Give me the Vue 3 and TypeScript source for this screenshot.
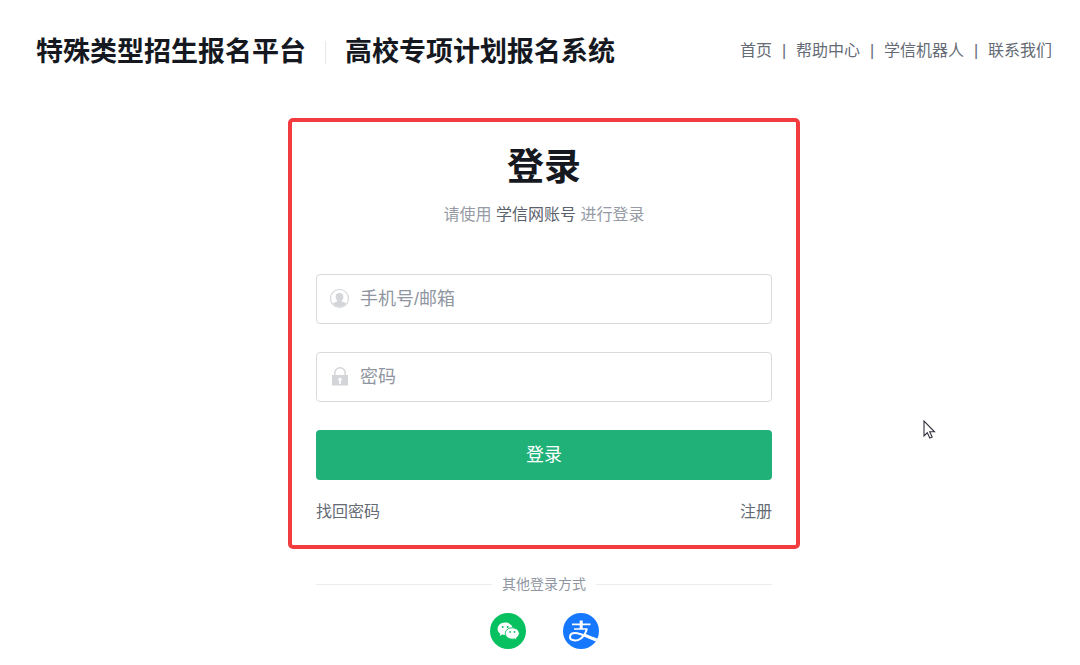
<script setup lang="ts">
import { ref } from 'vue'

interface NavLink {
  label: string
  href: string
}

const links: NavLink[] = [
  { label: '首页', href: '#home' },
  { label: '帮助中心', href: '#help' },
  { label: '学信机器人', href: '#robot' },
  { label: '联系我们', href: '#contact' },
]

const account = ref('')
const password = ref('')
</script>

<template>
  <div class="page">
    <header class="header">
      <div class="brand">
        <span>特殊类型招生报名平台</span>
        <i class="brand-line"></i>
        <span>高校专项计划报名系统</span>
      </div>
      <nav class="nav">
        <template v-for="(link, index) in links" :key="link.href">
          <span v-if="index > 0" class="nav-line">|</span>
          <a :href="link.href">{{ link.label }}</a>
        </template>
      </nav>
    </header>

    <main class="main">
      <form class="card" @submit.prevent>
        <h1>登录</h1>
        <p class="hint">请使用 <b>学信网账号</b> 进行登录</p>

        <label class="field">
          <svg width="20" height="20" viewBox="0 0 20 20" aria-hidden="true">
            <circle cx="9.5" cy="9.5" r="9" fill="none" stroke="#d6d8dc" stroke-width="1.2" />
            <path
              fill="#d3d5d9"
              d="M9.5 3.900c2.300 0 3.900 1.600 3.900 3.900 0 1.600-.7 2.900-1.600 3.600v1c1.900.7 3.700 1 4.400 2.100a8.500 8.500 0 0 1-13.400 0c.7-1.100 2.500-1.400 4.400-2.100v-1C6.300 10.700 5.600 9.400 5.600 7.800c0-2.300 1.600-3.900 3.900-3.900z"
            />
          </svg>
          <input v-model="account" type="text" placeholder="手机号/邮箱" aria-label="手机号/邮箱" />
        </label>

        <label class="field">
          <svg width="20" height="20" viewBox="0 0 20 20" aria-hidden="true">
            <path d="M4.800 9V6a5.200 5.200 0 0 1 10.400 0V9" fill="none" stroke="#d3d5d9" stroke-width="1.5" />
            <path
              fill="#d3d5d9"
              fill-rule="evenodd"
              d="M2 8h16v10.500H2zM10 10.700a1.800 1.800 0 0 0-.8 3.400V17h1.600v-2.900a1.800 1.800 0 0 0-.8-3.400z"
            />
          </svg>
          <input v-model="password" type="password" placeholder="密码" aria-label="密码" />
        </label>

        <button class="submit" type="submit">登录</button>

        <div class="below">
          <a href="#recover">找回密码</a>
          <a href="#register">注册</a>
        </div>
      </form>

      <section class="others">
        <div class="others-title">其他登录方式</div>
        <div class="providers">
          <a href="#wechat" aria-label="微信">
            <svg width="36" height="36" viewBox="0 0 36 36">
              <circle cx="18" cy="18" r="18" fill="#07c160" />
              <path
                fill="#fff"
                d="M15.200 9.500C11 9.500 7.600 12.300 7.600 15.900c0 2 1 3.700 2.700 4.800l-.7 2.300 2.700-1.400c.9.3 1.900.4 2.900.4 4.200 0 7.600-2.700 7.600-6.100 0-3.600-3.400-6.400-7.600-6.400z"
              />
              <path
                fill="#fff"
                stroke="#07c160"
                stroke-width="1"
                d="M22.300 14.800c-3.900 0-7 2.500-7 5.700s3.100 5.700 7 5.700c.8 0 1.500-.1 2.200-.3l2.600 1.300-.7-2.300c1.800-1 2.900-2.600 2.900-4.400 0-3.200-3.100-5.700-7-5.700z"
              />
              <g fill="#07c160">
                <circle cx="12.7" cy="13.9" r="1" />
                <circle cx="17.7" cy="13.9" r="1" />
                <circle cx="20.1" cy="18.9" r=".9" />
                <circle cx="24.5" cy="18.9" r=".9" />
              </g>
            </svg>
          </a>
          <a href="#alipay" aria-label="支付宝">
            <svg width="36" height="36" viewBox="0 0 36 36">
              <circle cx="18" cy="18" r="18" fill="#1677ff" />
              <g fill="none" stroke="#fff">
                <path d="M18.200 7.500v8.500" stroke-width="3" />
                <path d="M9 11.400h18.500M11 16h13.500" stroke-width="1.7" />
                <path
                  d="M23.800 16c-1.100 4-3.200 7.400-6.300 9.700-3.800 2.700-10.500 2.300-10.500-1.700 0-2.400 2.200-3.900 5-3.900 4.400 0 10.500 2.900 21 7.200"
                  stroke-width="2"
                />
                <path d="M21 21.800c4 1.700 8 3.400 12.800 5.100" stroke-width="3" />
              </g>
            </svg>
          </a>
        </div>
      </section>
    </main>

    <svg class="pointer" width="13" height="20" viewBox="0 0 13 20" aria-hidden="true">
      <path
        d="M1 1v15l3.300-3.200 2.500 5.200 2.400-1.100-2.500-5.100h4.800z"
        fill="#fff"
        stroke="#33333f"
        stroke-width="1.1"
      />
    </svg>
  </div>
</template>

<style>
body {
  background: #fff;
}
</style>

<style scoped>
.page {
  position: relative;
  font-family: 'Liberation Sans', 'Noto Sans CJK SC', sans-serif;
  font-size: 16px;
  line-height: 24px;
  color: #656b75;
}

a {
  color: inherit;
  text-decoration: none;
}

.header {
  display: flex;
  align-items: center;
  justify-content: space-between;
  height: 102px;
  padding: 0 28px 0 36px;
}

.brand {
  display: flex;
  align-items: center;
  gap: 19px;
  padding-top: 2px;
  font-size: 27px;
  line-height: 40px;
  font-weight: 700;
  color: #15191f;
}

.brand-line {
  width: 1px;
  height: 23px;
  background: #e7e8eb;
}

.nav {
  display: flex;
}

.nav-line {
  width: 24px;
  text-align: center;
}

.main {
  display: flex;
  flex-direction: column;
  align-items: center;
  padding: 16px 0 14px 8px;
}

.card {
  box-sizing: border-box;
  width: 512px;
  max-width: 100%;
  padding: 22px 24px 21px;
  border: 4px solid #f23c40;
  border-radius: 5px;
}

h1 {
  margin: 0;
  font-size: 37px;
  line-height: 48px;
  font-weight: 700;
  text-align: center;
  color: #15191f;
}

.hint {
  margin: 11px 0 47px;
  text-align: center;
  color: #969ba5;
}

.hint b {
  font-weight: 400;
  color: #5c626c;
}

.field {
  display: flex;
  align-items: center;
  gap: 10px;
  box-sizing: border-box;
  height: 50px;
  margin-bottom: 28px;
  padding: 0 13px;
  border: 1px solid #d8dadd;
  border-radius: 4px;
}

.field svg {
  flex: none;
}

.field input {
  flex: 1;
  min-width: 0;
  padding: 0;
  border: 0;
  outline: 0;
  background: transparent;
  font: inherit;
  font-size: 18px;
  color: #15191f;
}

.field input::placeholder {
  color: #9096a1;
  opacity: 1;
}

.submit {
  display: block;
  width: 100%;
  height: 50px;
  padding: 0;
  border: 0;
  border-radius: 4px;
  background: #1fb178;
  color: #fff;
  font: inherit;
  font-size: 18px;
}

.below {
  display: flex;
  justify-content: space-between;
  margin-top: 20px;
}

.others {
  width: 456px;
  max-width: 100%;
  margin-top: 25px;
}

.others-title {
  display: flex;
  align-items: center;
  gap: 10px;
  font-size: 14px;
  line-height: 20px;
  color: #9096a1;
}

.others-title::before,
.others-title::after {
  content: '';
  flex: 1;
  height: 1px;
  background: #ececee;
}

.providers {
  display: flex;
  justify-content: center;
  gap: 37px;
  margin-top: 19px;
}

.providers a,
.providers svg {
  display: block;
}

.pointer {
  position: absolute;
  left: 923px;
  top: 420px;
}
</style>
